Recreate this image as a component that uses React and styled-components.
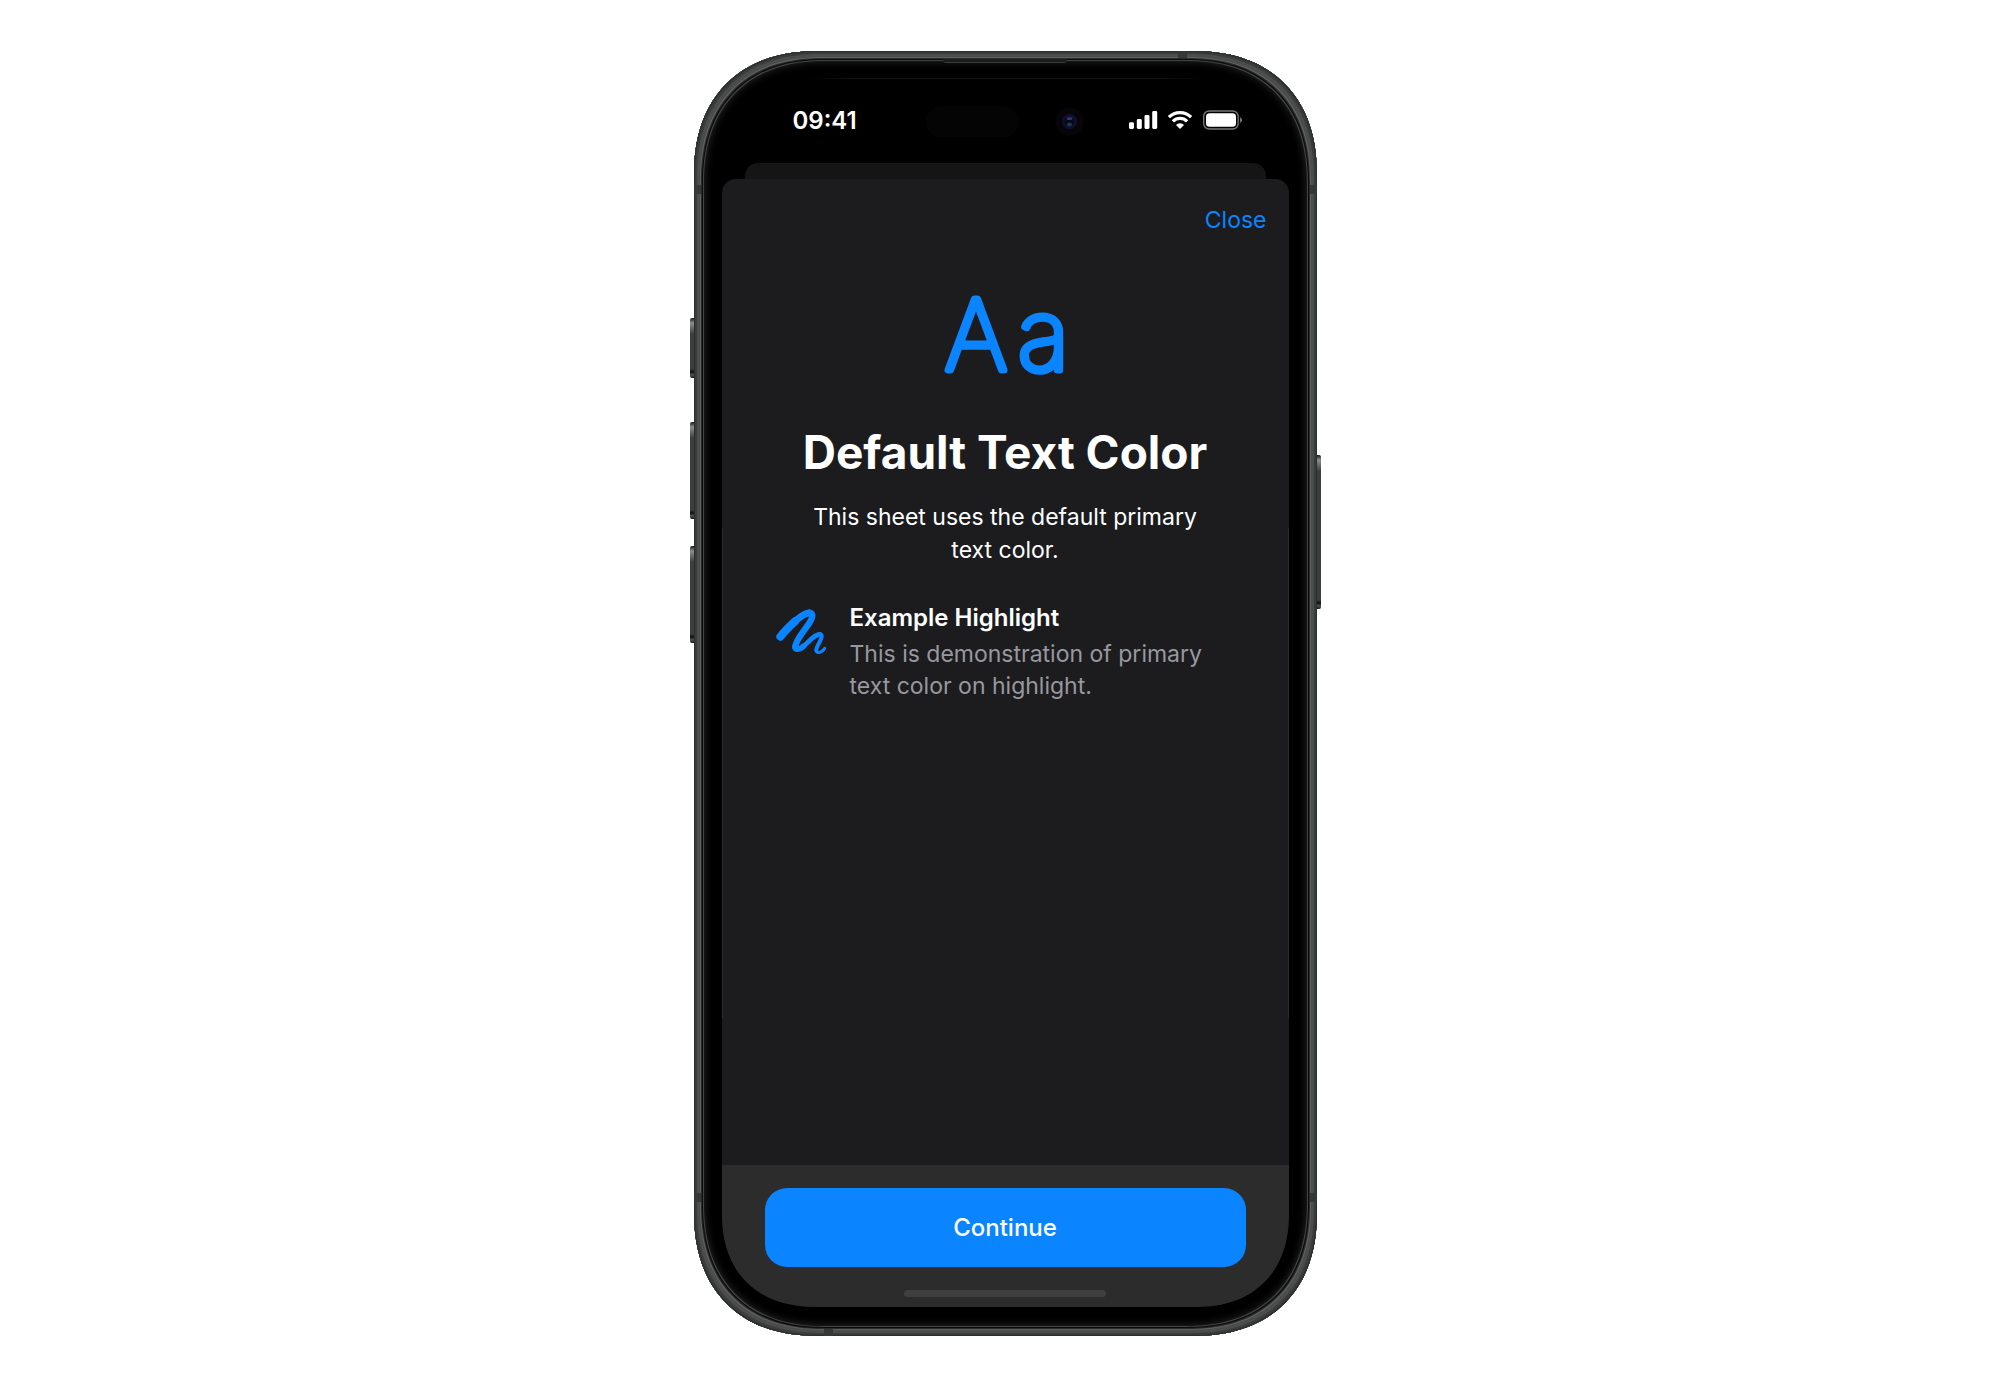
import React from "react";
import styled, { createGlobalStyle } from "styled-components";

const Global = createGlobalStyle`
  *, *::before, *::after { box-sizing: border-box; }
  body {
    margin: 0;
    background: #fff;
    font-family: Inter, Roboto, "Liberation Sans", sans-serif;
    font-size: 23px;
    line-height: 32px;
  }
`;

const Page = styled.main`
  min-height: 100vh;
  display: flex;
  justify-content: center;
  align-items: flex-start;
  padding: 51px 16px 50px;
`;

const Device = styled.div`
  position: relative;
  width: 100%;
  max-width: 623px;
  aspect-ratio: 623 / 1285;
  display: flex;
  padding: 27px 28px 29px;
  border-radius: 109px;
  background: #000;
  box-shadow:
    inset 0 0 0 1px #2c2e2d,
    inset 0 0 0 3px #3a3c3b,
    inset 0 0 0 6px #4b4d4c,
    inset 0 0 0 7px #5f6160,
    inset 0 0 0 8px #2a2a2a,
    inset 0 0 0 9px #0c0c0c,
    inset 0 0 0 10px #424242,
    inset 0 0 8px 10px #2b2b2b;

  @supports (corner-shape: superellipse(1.2)) {
    border-radius: 125px;
    corner-shape: superellipse(1.2);
  }
`;

const SideButton = styled.span`
  position: absolute;
  ${(p) => p.$side}: -4px;
  top: ${(p) => p.$top}px;
  width: 4px;
  height: ${(p) => p.$height}px;
  border-radius: ${(p) => (p.$side === "left" ? "2px 0 0 2px" : "0 2px 2px 0")};
  background: linear-gradient(#161817, #8b8f8e 5px, #3b3e3d 16px, #3b3e3d calc(100% - 9px), #0e0f0f calc(100% - 6px), #555 calc(100% - 3px), #111);
`;

const AntennaBand = styled.span`
  position: absolute;
  ${(p) => p.$edge}: 0;
  ${(p) => p.$from}: ${(p) => p.$offset}px;
  width: ${(p) => (p.$edge === "left" || p.$edge === "right" ? 7 : 9)}px;
  height: ${(p) => (p.$edge === "left" || p.$edge === "right" ? 9 : 7)}px;
  background: #363837;
`;

const Speaker = styled.span`
  position: absolute;
  top: 8px;
  left: 50%;
  width: 124px;
  height: 4px;
  transform: translateX(-50%);
  border-bottom: 1px solid #3a3a3a;
  border-radius: 0 0 3px 3px;
  background: #1c1c1c;
`;

const Screen = styled.div`
  flex: 1;
  min-width: 0;
  display: flex;
  flex-direction: column;
  overflow: hidden;
  border-radius: 82px;

  @supports (corner-shape: superellipse(1.2)) {
    border-radius: 95px;
    corner-shape: superellipse(1.2);
  }
`;

const StatusBar = styled.header`
  position: relative;
  flex: none;
  height: 85px;
  display: flex;
  justify-content: space-between;
  align-items: flex-start;
  padding: 27px 46px 0 71px;
  color: #fff;

  &::before {
    content: "";
    position: absolute;
    top: 0;
    left: 84px;
    right: 84px;
    height: 1px;
    background: linear-gradient(90deg, transparent, #141414 12%, #141414 88%, transparent);
  }
`;

const Time = styled.time`
  font-size: 24px;
  font-weight: 600;
`;

const StatusIcons = styled.svg`
  display: block;
  width: 114px;
  height: 20px;
  margin-top: 5px;
`;

const Island = styled.span`
  position: absolute;
  top: 28px;
  left: 204px;
  width: 93px;
  height: 31px;
  border-radius: 16px;
  background: #040404;
`;

const Camera = styled.svg`
  position: absolute;
  top: 29px;
  left: 333px;
  width: 29px;
  height: 29px;
`;

const BackSheet = styled.div`
  flex: none;
  height: 16px;
  margin: 0 23px;
  border-radius: 13px 13px 0 0;
  background: #151515;
`;

const Sheet = styled.section`
  flex: 1;
  display: flex;
  flex-direction: column;
  border-radius: 14px 14px 0 0;
  background:
    linear-gradient(#2c2c2e, #2c2c2e) 0 349px / 1px 490px no-repeat,
    linear-gradient(#2c2c2e, #2c2c2e) 100% 349px / 1px 490px no-repeat,
    #1c1c1e;
`;

const SheetHeader = styled.div`
  display: flex;
  justify-content: flex-end;
  padding: 25px 22px 0;
`;

const PlainButton = styled.button`
  padding: 0;
  border: 0;
  background: none;
  color: #0a84ff;
  font: inherit;
  cursor: pointer;
`;

const Content = styled.div`
  flex: 1;
  display: flex;
  flex-direction: column;
  align-items: center;
  padding: 36px 54px 0;
`;

const TextSymbol = styled.svg`
  display: block;
  width: 160px;
  height: 124px;
  overflow: visible;
`;

const Title = styled.h1`
  margin: 28px 0 0;
  color: #fff;
  font-size: 46px;
  font-weight: 700;
  line-height: 56px;
  text-align: center;
`;

const Description = styled.p`
  max-width: 400px;
  margin: 21px 0 0;
  color: #fff;
  line-height: 33px;
  text-align: center;
`;

const Highlight = styled.article`
  align-self: stretch;
  display: flex;
  gap: 24px;
  margin-top: 35px;
`;

const Scribble = styled.svg`
  flex: none;
  width: 50px;
  height: 46px;
  margin-top: 6px;
`;

const HighlightTitle = styled.h2`
  margin: 0 0 4px;
  color: #fff;
  font-size: 24px;
  font-weight: 600;
`;

const HighlightText = styled.p`
  margin: 0;
  color: #98989f;
`;

const Footer = styled.footer`
  display: flex;
  flex-direction: column;
  align-items: center;
  gap: 23px;
  padding: 23px 43px 10px;
  background: #2c2c2c;
`;

const PrimaryButton = styled(PlainButton)`
  width: 100%;
  height: 79px;
  border-radius: 22px;
  background: #0a84ff;
  color: #fff;
  font-size: 24px;
  font-weight: 500;
`;

const HomeIndicator = styled.span`
  width: 202px;
  height: 7px;
  border-radius: 4px;
  background: #3f3f3f;
`;

export default function App() {
  return (
    <>
      <Global />
      <Page>
        <Device>
          <SideButton $side="left" $top={267} $height={60} />
          <SideButton $side="left" $top={371} $height={97} />
          <SideButton $side="left" $top={495} $height={97} />
          <SideButton $side="right" $top={404} $height={154} />
          <AntennaBand $edge="left" $from="top" $offset={134} />
          <AntennaBand $edge="right" $from="top" $offset={134} />
          <AntennaBand $edge="left" $from="bottom" $offset={134} />
          <AntennaBand $edge="right" $from="bottom" $offset={134} />
          <AntennaBand $edge="top" $from="right" $offset={130} />
          <AntennaBand $edge="bottom" $from="left" $offset={130} />
          <Speaker />
          <Screen>
            <StatusBar>
              <Time dateTime="09:41">09:41</Time>
              <Island />
              <Camera viewBox="0 0 29 29" aria-hidden="true">
                <circle cx="14.500" cy="14.500" r="14" fill="#08050a" />
                <circle cx="14.500" cy="14.500" r="7.500" fill="#10102e" />
                <circle cx="14.500" cy="14.500" r="5" fill="#08081a" />
                <ellipse cx="14.500" cy="11.500" rx="3" ry="1.500" fill="#34346e" />
                <ellipse cx="14.500" cy="17.500" rx="2.500" ry="2" fill="#123c50" />
              </Camera>
              <StatusIcons viewBox="0 0 114 20" role="img" aria-label="Signal, Wi-Fi and battery">
                <g fill="#fff">
                  <rect x="0" y="12.200" width="5" height="6.800" rx="1.400" />
                  <rect x="7.800" y="9" width="5" height="10" rx="1.400" />
                  <rect x="15.500" y="5" width="5" height="14" rx="1.400" />
                  <rect x="23.200" y="1" width="5" height="18" rx="1.400" />
                </g>
                <g fill="none" stroke="#fff" strokeWidth="3.300">
                  <path d="M39.900 7.200a15.600 15.600 0 0 1 22.200 0" />
                  <path d="M43.900 11.400a10 10 0 0 1 14.200 0" />
                </g>
                <path d="M51 19l-4-4a5.700 5.700 0 0 1 8 0z" fill="#fff" />
                <rect x="74.700" y="1" width="34.500" height="18" rx="5.500" fill="none" stroke="#777" strokeWidth="1.400" />
                <rect x="77" y="3.200" width="30" height="13.600" rx="3.600" fill="#fff" />
                <path d="M111 7.200c2.700 1.100 2.700 4.500 0 5.600z" fill="#777" />
              </StatusIcons>
            </StatusBar>
            <BackSheet />
            <Sheet>
              <SheetHeader>
                <PlainButton type="button">Close</PlainButton>
              </SheetHeader>
              <Content>
                <TextSymbol viewBox="0 0 160 124" role="img" aria-label="Text format">
                  <text
                    y="98"
                    fill="#0a84ff"
                    stroke="#0a84ff"
                    strokeWidth="7.200"
                    strokeLinejoin="round"
                    fontFamily="Inter, sans-serif"
                    fontWeight="100"
                    fontSize="97"
                  >
                    <tspan x="20">A</tspan>
                    <tspan x="93">a</tspan>
                  </text>
                </TextSymbol>
                <Title>Default Text Color</Title>
                <Description>This sheet uses the default primary text color.</Description>
                <Highlight>
                  <Scribble viewBox="48 54 150 138" aria-hidden="true">
                    <g fill="none" stroke="#0a84ff" strokeLinecap="round" strokeLinejoin="round">
                      <path strokeWidth="24" d="M61 140C76 121 92 106 106 93" />
                      <path strokeWidth="21" d="M106 93C124 77 138 69 148 69" />
                      <path strokeWidth="19" d="M148 68C162 69 158 84 148 99C130 125 106 152 106 170" />
                      <path strokeWidth="17" d="M105 170C106 181 118 180 130 169" />
                      <path strokeWidth="14" d="M130 170C150 150 166 133 179 133" />
                      <path strokeWidth="12" d="M179 132C190 134 184 146 179 155C172 168 168 176 169 181" />
                      <path strokeWidth="9" d="M168 179C168 192 184 190 194 175" />
                    </g>
                  </Scribble>
                  <div>
                    <HighlightTitle>Example Highlight</HighlightTitle>
                    <HighlightText>This is demonstration of primary text color on highlight.</HighlightText>
                  </div>
                </Highlight>
              </Content>
              <Footer>
                <PrimaryButton type="button">Continue</PrimaryButton>
                <HomeIndicator />
              </Footer>
            </Sheet>
          </Screen>
        </Device>
      </Page>
    </>
  );
}
